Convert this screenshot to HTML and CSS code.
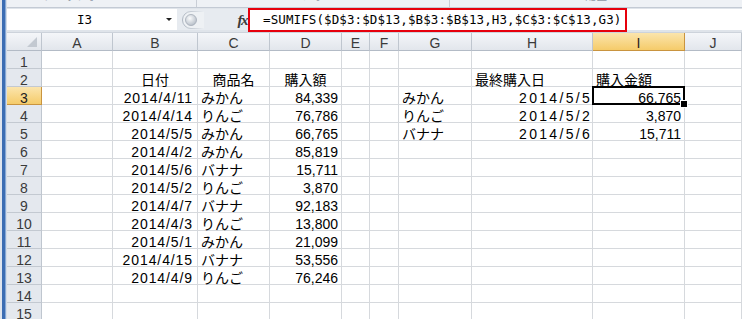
FILE: index.html
```html
<!DOCTYPE html>
<html lang="ja">
<head>
<meta charset="utf-8">
<title>SUMIFS</title>
<link rel="stylesheet" href="styles.css">
</head>
<body>
<div class="app">
  <div class="edge"></div>
  <div class="main">
    <div class="ribbon-foot">
      <div class="grp g1"><span class="lbl">クリップボード</span></div>
      <div class="grp g2"><span class="lbl">フォント</span></div>
      <div class="grp g3"><span class="lbl">配置</span></div>
    </div>
    <div class="fbar">
      <div class="namebox"><span class="name">I3</span><span class="dd"></span></div>
      <div class="grip">
        <svg width="26" height="22" viewBox="0 0 26 22">
          <defs>
            <linearGradient id="pill" x1="0" y1="0" x2="1" y2="0">
              <stop offset="0" stop-color="#aeb6c1"/>
              <stop offset="1" stop-color="#aeb6c1" stop-opacity="0"/>
            </linearGradient>
            <radialGradient id="knob" cx="0.4" cy="0.35" r="0.7">
              <stop offset="0" stop-color="#fafbfc"/>
              <stop offset="1" stop-color="#b4bcc6"/>
            </radialGradient>
          </defs>
          <path d="M24 2.5 H11 A8.5 8.5 0 0 0 11 19.5 H24" fill="#eef1f4" stroke="url(#pill)" stroke-width="1"/>
          <circle cx="11" cy="11" r="5.5" fill="url(#knob)" stroke="#a3abb6" stroke-width="0.8"/>
        </svg>
      </div>
      <div class="fx">fx</div>
      <div class="finput"><span class="formula">=SUMIFS($D$3:$D$13,$B$3:$B$13,H3,$C$3:$C$13,G3)</span></div>
    </div>
    <div class="sheet">
      <div class="ch corner"><span class="tri"></span></div>
      <div class="ch">A</div><div class="ch">B</div><div class="ch">C</div><div class="ch">D</div><div class="ch">E</div><div class="ch">F</div><div class="ch">G</div><div class="ch">H</div><div class="ch sel">I</div><div class="ch">J</div>

      <div class="rh">1</div>
      <div class="c"></div><div class="c"></div><div class="c"></div><div class="c"></div><div class="c"></div><div class="c"></div><div class="c"></div><div class="c"></div><div class="c"></div><div class="c"></div>

      <div class="rh">2</div>
      <div class="c"></div><div class="c m">日付</div><div class="c m">商品名</div><div class="c m">購入額</div><div class="c"></div><div class="c"></div><div class="c"></div><div class="c">最終購入日</div><div class="c">購入金額</div><div class="c"></div>

      <div class="rh sel">3</div>
      <div class="c"></div><div class="c r d">2014/4/11</div><div class="c">みかん</div><div class="c r">84,339</div><div class="c"></div><div class="c"></div><div class="c">みかん</div><div class="c r d2">2014/5/5</div><div class="c r act">66,765</div><div class="c"></div>

      <div class="rh">4</div>
      <div class="c"></div><div class="c r d">2014/4/14</div><div class="c">りんご</div><div class="c r">76,786</div><div class="c"></div><div class="c"></div><div class="c">りんご</div><div class="c r d2">2014/5/2</div><div class="c r">3,870</div><div class="c"></div>

      <div class="rh">5</div>
      <div class="c"></div><div class="c r d">2014/5/5</div><div class="c">みかん</div><div class="c r">66,765</div><div class="c"></div><div class="c"></div><div class="c">バナナ</div><div class="c r d2">2014/5/6</div><div class="c r">15,711</div><div class="c"></div>

      <div class="rh">6</div>
      <div class="c"></div><div class="c r d">2014/4/2</div><div class="c">みかん</div><div class="c r">85,819</div><div class="c"></div><div class="c"></div><div class="c"></div><div class="c"></div><div class="c"></div><div class="c"></div>

      <div class="rh">7</div>
      <div class="c"></div><div class="c r d">2014/5/6</div><div class="c">バナナ</div><div class="c r">15,711</div><div class="c"></div><div class="c"></div><div class="c"></div><div class="c"></div><div class="c"></div><div class="c"></div>

      <div class="rh">8</div>
      <div class="c"></div><div class="c r d">2014/5/2</div><div class="c">りんご</div><div class="c r">3,870</div><div class="c"></div><div class="c"></div><div class="c"></div><div class="c"></div><div class="c"></div><div class="c"></div>

      <div class="rh">9</div>
      <div class="c"></div><div class="c r d">2014/4/7</div><div class="c">バナナ</div><div class="c r">92,183</div><div class="c"></div><div class="c"></div><div class="c"></div><div class="c"></div><div class="c"></div><div class="c"></div>

      <div class="rh">10</div>
      <div class="c"></div><div class="c r d">2014/4/3</div><div class="c">りんご</div><div class="c r">13,800</div><div class="c"></div><div class="c"></div><div class="c"></div><div class="c"></div><div class="c"></div><div class="c"></div>

      <div class="rh">11</div>
      <div class="c"></div><div class="c r d">2014/5/1</div><div class="c">みかん</div><div class="c r">21,099</div><div class="c"></div><div class="c"></div><div class="c"></div><div class="c"></div><div class="c"></div><div class="c"></div>

      <div class="rh">12</div>
      <div class="c"></div><div class="c r d">2014/4/15</div><div class="c">バナナ</div><div class="c r">53,556</div><div class="c"></div><div class="c"></div><div class="c"></div><div class="c"></div><div class="c"></div><div class="c"></div>

      <div class="rh">13</div>
      <div class="c"></div><div class="c r d">2014/4/9</div><div class="c">りんご</div><div class="c r">76,246</div><div class="c"></div><div class="c"></div><div class="c"></div><div class="c"></div><div class="c"></div><div class="c"></div>

      <div class="rh">14</div>
      <div class="c"></div><div class="c"></div><div class="c"></div><div class="c"></div><div class="c"></div><div class="c"></div><div class="c"></div><div class="c"></div><div class="c"></div><div class="c"></div>

      <div class="rh">15</div>
      <div class="c"></div><div class="c"></div><div class="c"></div><div class="c"></div><div class="c"></div><div class="c"></div><div class="c"></div><div class="c"></div><div class="c"></div><div class="c"></div>
    </div>
  </div>
</div>
</body>
</html>
```
FILE: styles.css
```css
* { box-sizing: border-box; }
html, body { margin: 0; padding: 0; }
body {
  width: 742px;
  height: 319px;
  overflow: hidden;
  background: #fff;
  font-family: "Liberation Sans", "Noto Sans CJK JP", sans-serif;
  color: #000;
}
.app { display: flex; height: 319px; }
.edge {
  width: 7px;
  flex: none;
  background: linear-gradient(to right, #dfe5ee 0, #dfe5ee 2px, #3c6db3 2px, #3c6db3 5px, #86a8d6 5px, #86a8d6 6px, #d3dce8 6px);
}
.main { flex: 1; min-width: 0; display: flex; flex-direction: column; }

/* ribbon group labels (cut off at the top edge) */
.ribbon-foot {
  height: 8px;
  flex: none;
  display: flex;
  overflow: hidden;
  background: #eef1f5;
  border-bottom: 1px solid #c3cad4;
}
.grp { text-align: center; overflow: hidden; border-right: 1px solid #c9ced6; }
.g1 { width: 190px; }
.g2 { width: 253px; }
.g3 { flex: 1; border-right: 0; }
.lbl {
  display: block;
  margin-top: -9px;
  font-size: 11px;
  line-height: 11px;
  color: #8d97a5;
}
.g1 .lbl { padding-right: 40px; }

/* formula bar */
.fbar {
  height: 25px;
  flex: none;
  display: flex;
  padding: 1px 0 2px;
  background: #dfe4ea;
  border-bottom: 1px solid #cdd3db;
}
.namebox {
  width: 170px;
  flex: none;
  display: flex;
  align-items: center;
  background: #fff;
}
.name {
  flex: 1;
  text-align: center;
  font-family: "DejaVu Sans Mono", monospace;
  font-size: 12.5px;
  color: #000;
}
.dd {
  width: 0;
  height: 0;
  margin: 0 5px 0 4px;
  border-left: 3px solid transparent;
  border-right: 3px solid transparent;
  border-top: 3.5px solid #222;
}
.grip {
  width: 30px;
  flex: none;
  padding-left: 3px;
  display: flex;
  align-items: center;
  background: #e7ebf0;
}
.grip svg { display: block; }
.fx {
  width: 41px;
  flex: none;
  text-align: right;
  padding-right: 1px;
  font-family: "Liberation Serif", serif;
  font-style: italic;
  font-weight: bold;
  font-size: 15px;
  line-height: 22px;
  letter-spacing: -1.5px;
  color: #3b3b3b;
  background: #e7ebf0;
}
.finput {
  flex: 1;
  background: #fff;
  display: flex;
  align-items: flex-start;
}
.formula {
  display: inline-block;
  height: 24px;
  margin-top: -1px;
  padding: 0 4px 0 13px;
  border: 2px solid #e6000c;
  font-family: "DejaVu Sans Mono", monospace;
  font-size: 12.5px;
  line-height: 20px;
  letter-spacing: 0.1px;
  white-space: nowrap;
  color: #000;
}

/* sheet grid */
.sheet {
  display: grid;
  grid-template-columns: 35px 71px 85px 72px 72px 28px 29px 73px 121px 92px 57px;
  grid-auto-rows: 18px;
}
.c {
  position: relative;
  border-right: 1px solid #d6d9dd;
  border-bottom: 1px solid #d6d9dd;
  padding: 4px 3px 0;
  font-size: 14px;
  line-height: 14px;
  white-space: nowrap;
}
.r { text-align: right; }
.m { text-align: center; }
.d { padding-right: 4px; letter-spacing: 0.9px; }
.d2 { padding-right: 0; letter-spacing: 2.3px; }
.ch, .rh {
  background: linear-gradient(#f4f6f9, #e2e6ec);
  border-right: 1px solid #bfc6cf;
  border-bottom: 1px solid #b3bbc6;
  text-align: center;
  font-size: 14px;
  line-height: 14px;
  color: #3a3a3a;
  white-space: nowrap;
}
.ch { padding-top: 3px; }
.rh { padding-top: 4px; background: #e4e8ee; border-bottom-color: #c3c9d1; }
.ch.sel, .rh.sel {
  background: linear-gradient(#fbe5ad, #f5cb6a);
  border-right-color: #c9943f;
  border-bottom-color: #c9943f;
  color: #222;
}
.corner { position: relative; }
.tri {
  position: absolute;
  right: 4px;
  bottom: 3px;
  width: 0;
  height: 0;
  border-left: 10px solid transparent;
  border-bottom: 10px solid #c3c9d1;
}
.act::after {
  content: "";
  position: absolute;
  top: -1px;
  left: -1px;
  right: -1px;
  bottom: -1px;
  border: 2px solid #000;
}
.act::before {
  content: "";
  position: absolute;
  right: -4px;
  bottom: -4px;
  width: 6px;
  height: 6px;
  background: #000;
  border: 1px solid #fff;
  z-index: 2;
}
```
